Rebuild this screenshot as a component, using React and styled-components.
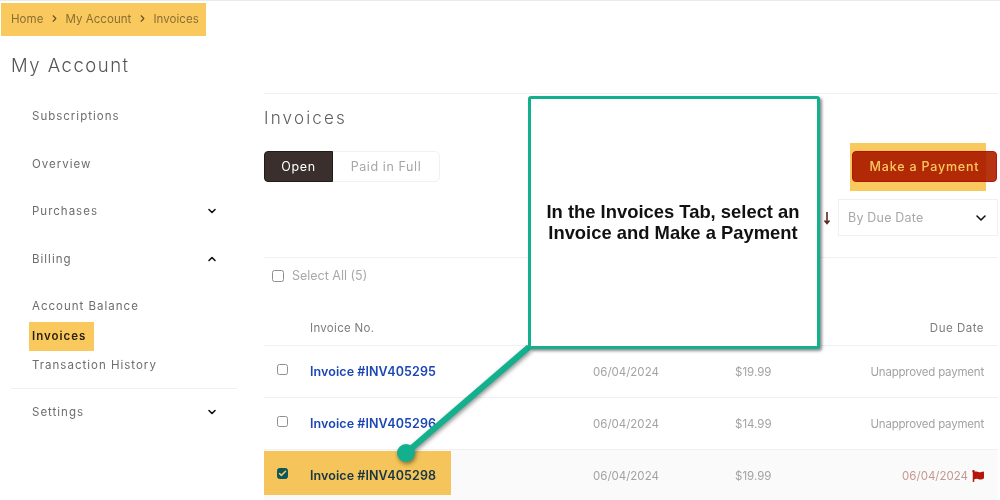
import styled, { createGlobalStyle } from "styled-components";
import { ChevronDown, ChevronRight, ChevronUp, Check } from "lucide-react";
import { FaFlag } from "react-icons/fa";

const INVOICES = [
  { no: "INV405295", date: "06/04/2024", amount: "$19.99", due: "Unapproved payment" },
  { no: "INV405296", date: "06/04/2024", amount: "$14.99", due: "Unapproved payment" },
  { no: "INV405298", date: "06/04/2024", amount: "$19.99", due: "06/04/2024", late: true, checked: true },
];

const GlobalStyle = createGlobalStyle`
  html, body {
    margin: 0;
    padding: 0;
    background: #fff;
    font-family: "Inter", "Liberation Sans", sans-serif;
  }
`;

const Page = styled.div`
  position: relative;
  width: 1000px;
  height: 500px;
  overflow: hidden;
  background: #fff;
  border-top: 1px solid #eaeaea;
  box-sizing: border-box;
`;

const Breadcrumb = styled.nav`
  height: 35px;
  padding-left: 11px;
  display: flex;
  align-items: center;
  gap: 5.5px;
  font-size: 11.5px;
  letter-spacing: 0.05px;
  color: #8c8c8c;
`;

const Body = styled.div`
  display: flex;
`;

const Sidebar = styled.aside`
  width: 226px;
  margin-left: 11px;
  flex: none;
`;

const AccountTitle = styled.h1`
  margin: 14px 0 12.5px;
  height: 30px;
  line-height: 30px;
  font-size: 18.5px;
  font-weight: 300;
  letter-spacing: 1.5px;
  color: #555;
`;

const NavItem = styled.div`
  height: 47.5px;
  padding: 0 19px 0 21px;
  display: flex;
  align-items: center;
  justify-content: space-between;
  font-size: 11.5px;
  letter-spacing: 1px;
  color: #6d6d6d;
`;

const SubNav = styled.div`
  padding: 9px 0 7.5px;
  border-bottom: 1px solid #f0f0f0;
`;

const SubItem = styled.div`
  height: 29.5px;
  padding-left: 21px;
  display: flex;
  align-items: center;
  font-size: 11.5px;
  letter-spacing: 1px;
  font-weight: ${(props) => (props.$active ? 600 : 400)};
  color: ${(props) => (props.$active ? "#2b2b2b" : "#6d6d6d")};
`;

const Main = styled.main`
  width: 734px;
  margin-left: 27px;
  margin-top: 57px;
  flex: none;
  border-top: 1px solid #f0f0f0;
`;

const SectionTitle = styled.h2`
  margin: 0 0 9px;
  height: 48px;
  line-height: 48px;
  font-size: 17px;
  font-weight: 300;
  letter-spacing: 2.2px;
  color: #5c5c5c;
`;

const Toolbar = styled.div`
  display: flex;
  justify-content: space-between;
  height: 31px;
  padding-right: 1px;
`;

const Tabs = styled.div`
  display: flex;
  width: 176px;
  border: 1px solid #f1f1f1;
  border-radius: 5px;
  box-sizing: border-box;
`;

const Tab = styled.div`
  display: flex;
  align-items: center;
  justify-content: center;
  margin: ${(props) => (props.$active ? "-1px 0 -1px -1px" : "0")};
  width: ${(props) => (props.$active ? "69px" : "auto")};
  flex: ${(props) => (props.$active ? "none" : "1")};
  box-sizing: border-box;
  border: ${(props) => (props.$active ? "1px solid #211b1a" : "none")};
  border-radius: ${(props) => (props.$active ? "4px 0 0 4px" : "0")};
  background: ${(props) => (props.$active ? "#3a2f2d" : "transparent")};
  color: ${(props) => (props.$active ? "#fff" : "#a6a6a6")};
  font-size: 12.5px;
  letter-spacing: 0.6px;
`;

const PayButton = styled.button`
  width: 145px;
  border: 1px solid #b8160c;
  border-radius: 4px;
  background: #b63410;
  color: #fff;
  font-family: inherit;
  font-size: 12.5px;
  font-weight: 500;
  letter-spacing: 0.8px;
  padding: 0;
`;

const SortRow = styled.div`
  display: flex;
  justify-content: flex-end;
  align-items: center;
  gap: 6px;
  height: 37px;
  margin: 17px 0 21px;
`;

const SortSelect = styled.div`
  width: 160px;
  height: 37px;
  box-sizing: border-box;
  border: 1px solid #f0f0f0;
  padding: 0 8px 0 9px;
  display: flex;
  align-items: center;
  justify-content: space-between;
  font-size: 12.5px;
  letter-spacing: 0.2px;
  color: #a8a8a8;
`;

const SelectAll = styled.div`
  height: 35px;
  border-top: 1px solid #f0f0f0;
  padding-left: 8px;
  display: flex;
  align-items: center;
  gap: 8px;
  font-size: 12.5px;
  color: #a8a8a8;
`;

const CheckBox = styled.span`
  width: ${(props) => props.$size}px;
  height: ${(props) => props.$size}px;
  box-sizing: border-box;
  display: flex;
  align-items: center;
  justify-content: center;
  border-radius: 2.5px;
  border: 1px solid ${(props) => (props.$checked ? "#0d6efd" : "#8f8f8f")};
  background: ${(props) => (props.$checked ? "#0d6efd" : "#fff")};
  color: #fff;
`;

const TableRow = styled.div`
  display: grid;
  grid-template-columns: 46px 283px 142px 60px 1fr;
  align-items: center;
  padding-right: 14px;
`;

const HeadRow = styled(TableRow)`
  height: 52px;
  align-items: end;
  padding-bottom: 10px;
  box-sizing: border-box;
  font-size: 11.5px;
  letter-spacing: 0.3px;
  color: #7d7d7d;
`;

const DueHead = styled.div`
  text-align: right;
  letter-spacing: 0.5px;
`;

const InvoiceRow = styled(TableRow)`
  height: 52px;
  box-sizing: border-box;
  border-top: 1px solid #f0f0f0;
  background: ${(props) => (props.$checked ? "#fafafa" : "#fff")};
  font-size: 11.5px;
  color: #a3a3a3;
`;

const CheckCell = styled.div`
  padding-left: 13px;
  margin-top: -4px;
`;

const InvoiceLink = styled.a`
  color: #1b46b4;
  font-size: 12.5px;
  font-weight: 600;
  letter-spacing: 0.08px;
`;

const DueCell = styled.div`
  display: flex;
  justify-content: flex-end;
  align-items: center;
  gap: 4px;
  letter-spacing: ${(props) => (props.$late ? 0 : -0.2)}px;
  color: ${(props) => (props.$late ? "#c49a90" : "inherit")};
`;

const Highlight = styled.div`
  position: absolute;
  left: ${(props) => props.$x}px;
  top: ${(props) => props.$y}px;
  width: ${(props) => props.$w}px;
  height: ${(props) => props.$h}px;
  background: #fac95d;
  mix-blend-mode: multiply;
`;

const Callout = styled.div`
  position: absolute;
  left: 528px;
  top: 95px;
  width: 292px;
  height: 253px;
  box-sizing: border-box;
  display: flex;
  align-items: center;
  justify-content: center;
  padding: 0 2px 2px 0;
  text-align: center;
  background: #fff;
  border: 3px solid #12b08d;
  border-radius: 3px;
  box-shadow: 2px 2px 3px rgba(0, 0, 0, 0.45);
  font-family: "Liberation Sans", Arial, sans-serif;
  font-size: 18.4px;
  line-height: 21px;
  font-weight: 700;
  color: #111;
`;

const Connector = styled.svg`
  position: absolute;
  left: 390px;
  top: 335px;
  filter: drop-shadow(1px 2px 2px rgba(0, 0, 0, 0.45));
`;

function Box({ checked, size = 11 }) {
  return (
    <CheckBox $checked={checked} $size={size}>
      {checked && <Check size={9} strokeWidth={4} />}
    </CheckBox>
  );
}

export default function App() {
  return (
    <>
      <GlobalStyle />
      <Page>
        <Breadcrumb>
          <span>Home</span>
          <ChevronRight size={11} strokeWidth={2.4} color="#666" />
          <span>My Account</span>
          <ChevronRight size={11} strokeWidth={2.4} color="#666" />
          <span>Invoices</span>
        </Breadcrumb>
        <Body>
          <Sidebar>
            <AccountTitle>My Account</AccountTitle>
            <NavItem>Subscriptions</NavItem>
            <NavItem>Overview</NavItem>
            <NavItem>
              Purchases
              <ChevronDown size={12} strokeWidth={3.2} color="#111" />
            </NavItem>
            <NavItem>
              Billing
              <ChevronUp size={12} strokeWidth={3.2} color="#111" />
            </NavItem>
            <SubNav>
              <SubItem>Account Balance</SubItem>
              <SubItem $active>Invoices</SubItem>
              <SubItem>Transaction History</SubItem>
            </SubNav>
            <NavItem>
              Settings
              <ChevronDown size={12} strokeWidth={3.2} color="#111" />
            </NavItem>
          </Sidebar>
          <Main>
            <SectionTitle>Invoices</SectionTitle>
            <Toolbar>
              <Tabs>
                <Tab $active>Open</Tab>
                <Tab>Paid in Full</Tab>
              </Tabs>
              <PayButton>Make a Payment</PayButton>
            </Toolbar>
            <SortRow>
              <svg width="10" height="14" viewBox="0 0 10 14" fill="none" stroke="#5a2a24" strokeWidth="1.6">
                <path d="M5 1v11M2.5 9.5 5 12.5l2.5-3" />
              </svg>
              <SortSelect>
                By Due Date
                <ChevronDown size={16} strokeWidth={2.4} color="#111" />
              </SortSelect>
            </SortRow>
            <SelectAll>
              <Box size={12} />
              Select All (5)
            </SelectAll>
            <HeadRow>
              <span />
              <span>Invoice No.</span>
              <span />
              <span />
              <DueHead>Due Date</DueHead>
            </HeadRow>
            {INVOICES.map((invoice) => (
              <InvoiceRow key={invoice.no} $checked={invoice.checked}>
                <CheckCell>
                  <Box checked={invoice.checked} />
                </CheckCell>
                <InvoiceLink>Invoice #{invoice.no}</InvoiceLink>
                <span>{invoice.date}</span>
                <span>{invoice.amount}</span>
                <DueCell $late={invoice.late}>
                  {invoice.due}
                  {invoice.late && <FaFlag size={12} color="#b3170c" />}
                </DueCell>
              </InvoiceRow>
            ))}
          </Main>
        </Body>
        <Highlight $x={1} $y={2} $w={205} $h={33} />
        <Highlight $x={29} $y={321} $w={65} $h={29} />
        <Highlight $x={850} $y={142} $w={136} $h={48} />
        <Highlight $x={264} $y={450} $w={187} $h={44} />
        <Connector width="150" height="130" viewBox="0 0 150 130">
          <path d="M139 11 16 117" stroke="#12b08d" strokeWidth="6" fill="none" />
          <circle cx="16" cy="117" r="9" fill="#12b08d" />
        </Connector>
        <Callout>
          In the Invoices Tab, select an
          <br />
          Invoice and Make a Payment
        </Callout>
      </Page>
    </>
  );
}
